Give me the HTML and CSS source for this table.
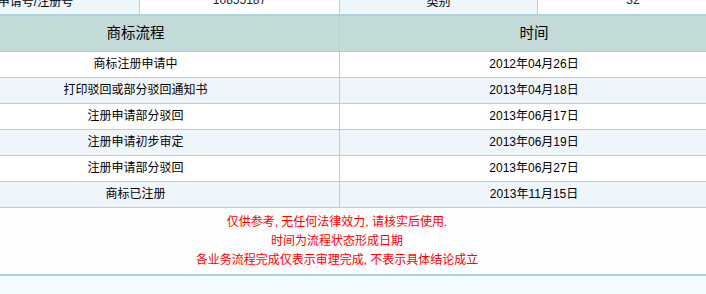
FILE: index.html
```html
<!DOCTYPE html>
<html lang="zh-CN">
<head>
<meta charset="utf-8">
<title>商标流程</title>
<link rel="stylesheet" href="styles.css">
</head>
<body>
<div class="page">
  <div class="info-wrap">
    <div class="info-row">
      <div class="cell alt">申请号/注册号</div>
      <div class="cell num">10855187</div>
      <div class="cell alt">类别</div>
      <div class="cell num last">32</div>
    </div>
  </div>
  <div class="flow">
    <div class="row head">
      <div class="c1">商标流程</div>
      <div class="c2">时间</div>
    </div>
    <div class="row">
      <div class="c1">商标注册申请中</div>
      <div class="c2">2012年04月26日</div>
    </div>
    <div class="row alt">
      <div class="c1">打印驳回或部分驳回通知书</div>
      <div class="c2">2013年04月18日</div>
    </div>
    <div class="row">
      <div class="c1">注册申请部分驳回</div>
      <div class="c2">2013年06月17日</div>
    </div>
    <div class="row alt">
      <div class="c1">注册申请初步审定</div>
      <div class="c2">2013年06月19日</div>
    </div>
    <div class="row">
      <div class="c1">注册申请部分驳回</div>
      <div class="c2">2013年06月27日</div>
    </div>
    <div class="row alt">
      <div class="c1">商标已注册</div>
      <div class="c2">2013年11月15日</div>
    </div>
    <div class="note">
      <p>仅供参考, 无任何法律效力, 请核实后使用.</p>
      <p>时间为流程状态形成日期</p>
      <p>各业务流程完成仅表示审理完成, 不表示具体结论成立</p>
    </div>
  </div>
</div>
</body>
</html>
```

FILE: styles.css
```css
html, body {
  margin: 0;
  padding: 0;
}
body {
  background: #f4fbfe;
  font-family: "Liberation Sans", "Noto Sans CJK SC", sans-serif;
  font-size: 12px;
  color: #000;
  overflow: hidden;
}
.page {
  width: 796px;
  margin-left: -68px;
}
.info-wrap {
  height: 14px;
  overflow: hidden;
  border-bottom: 2px solid #a9d3e1;
}
.info-row {
  display: grid;
  grid-template-columns: 208px 200px 198px 1fr;
  margin-top: -10px;
  height: 24px;
}
.info-row .cell {
  background: #fff;
  border-right: 1px solid #a9d3e1;
  text-align: center;
  line-height: 24px;
}
.info-row .cell.alt {
  background: #eef6fc;
}
.info-row .cell.num {
  color: #222233;
  line-height: 20px;
}
.info-row .cell.last {
  border-right: none;
}
.flow {
  background: #fdfdfd;
  border-bottom: 2px solid #a9d3e1;
}
.row {
  display: grid;
  grid-template-columns: 408px 1fr;
  height: 25px;
  border-bottom: 1px solid #a9d3e1;
  background: #fff;
}
.row.alt {
  background: #eef6fc;
}
.row > div {
  text-align: center;
  line-height: 25px;
}
.row .c1 {
  border-right: 1px solid #a9d3e1;
}
.row.head {
  height: 35px;
  background: #c2dbd9;
}
.row.head > div {
  line-height: 35px;
  font-size: 14.5px;
}
.note {
  height: 57px;
  padding: 5px 0 4px 14px;
  text-align: center;
  color: #ff0000;
}
.note p {
  margin: 0;
  line-height: 19px;
}
```
